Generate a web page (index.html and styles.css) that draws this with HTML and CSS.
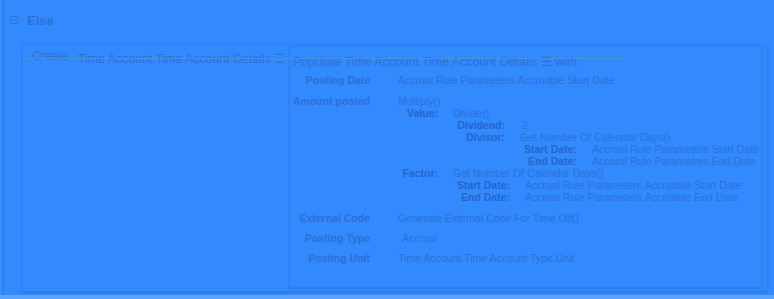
FILE: index.html
```html
<!DOCTYPE html>
<html lang="en">
<head>
    <meta charset="UTF-8">
    <title>Else</title>
    <link rel="stylesheet" href="styles.css">
</head>
<body>
<div class="panel">
    <div class="head">
        <span class="toggle"></span>
        <span class="head-title">Else</span>
    </div>
    <div class="create">
        <div class="create-left">
            <span class="verb">Create</span>
            <span class="target">Time Account.Time Account Details &#9776;</span>
        </div>
        <div class="populate">
            <div class="pop-title">Populate Time Account.Time Account Details &#9776; with:</div>
            <div class="row">
                <div class="label">Posting Date</div>
                <div class="value">Accrual Rule Parameters.Accruable Start Date</div>
            </div>
            <div class="row">
                <div class="label">Amount posted</div>
                <div class="value">
                    <div>Multiply()</div>
                    <div class="param">
                        <span class="k k40">Value:</span>
                        <div class="v">
                            <div>Divide()</div>
                            <div class="param">
                                <span class="k k52">Dividend:</span>
                                <div class="v v2">2</div>
                            </div>
                            <div class="param">
                                <span class="k k52">Divisor:</span>
                                <div class="v">
                                    <div>Get Number Of Calendar Days()</div>
                                    <div class="param">
                                        <span class="k k57">Start Date:</span>
                                        <div class="v">Accrual Rule Parameters.Start Date</div>
                                    </div>
                                    <div class="param">
                                        <span class="k k57">End Date:</span>
                                        <div class="v">Accrual Rule Parameters.End Date</div>
                                    </div>
                                </div>
                            </div>
                        </div>
                    </div>
                    <div class="param">
                        <span class="k k40">Factor:</span>
                        <div class="v">
                            <div>Get Number Of Calendar Days()</div>
                            <div class="param">
                                <span class="k k57">Start Date:</span>
                                <div class="v">Accrual Rule Parameters.Accruable Start Date</div>
                            </div>
                            <div class="param">
                                <span class="k k57">End Date:</span>
                                <div class="v">Accrual Rule Parameters.Accruable End Date</div>
                            </div>
                        </div>
                    </div>
                </div>
            </div>
            <div class="row tight">
                <div class="label">External Code</div>
                <div class="value">Generate External Code For Time Off()</div>
            </div>
            <div class="row tight">
                <div class="label">Posting Type</div>
                <div class="value indent">Accrual</div>
            </div>
            <div class="row tight">
                <div class="label">Posting Unit</div>
                <div class="value">Time Account.Time Account Type.Unit</div>
            </div>
        </div>
        <div class="drag-line"></div>
    </div>
</div>
</body>
</html>
```

FILE: styles.css
```css
* {
    margin: 0;
    padding: 0;
    box-sizing: border-box;
}

body {
    background-color: #5ea2ff;
    font-family: "Liberation Sans", Arial, sans-serif;
    color: #2b70d9;
    white-space: nowrap;
}

.panel {
    height: 295px;
    background-color: #3389fe;
    border-left: 2px solid #3a8dfe;
    box-shadow: inset 3px 0 0 #2f82f4;
    padding-left: 20px;
}

.head {
    display: flex;
    align-items: center;
    height: 44px;
    margin-left: -12px;
    padding-bottom: 4px;
}

.toggle {
    position: relative;
    width: 8px;
    height: 8px;
    border: 1px solid #2d74dc;
    margin-right: 9px;
}

.toggle::after {
    content: "";
    position: absolute;
    left: 1px;
    right: 1px;
    top: 2px;
    height: 1px;
    background-color: #2d74dc;
}

.head-title {
    font-size: 13px;
    font-weight: bold;
    color: #2a6fd6;
}

.create {
    position: relative;
    display: flex;
    width: 746px;
    height: 248px;
    border: 1px solid #2e7ef0;
    border-radius: 3px;
    box-shadow: 0 1px 2px #2c78e6;
}

.create-left {
    width: 266px;
    flex-shrink: 0;
    display: flex;
    align-items: flex-start;
    padding: 3px 0 0 9px;
}

.verb {
    font-size: 12px;
    line-height: 16px;
}

.target {
    font-size: 12.3px;
    line-height: 16px;
    margin: 3px 0 0 10px;
}

.populate {
    width: 473px;
    flex-shrink: 0;
    margin: 1px 0 3px 0;
    border: 1px solid #2e7ef0;
    border-radius: 3px;
    box-shadow: 0 1px 2px #2c78e6;
    padding: 7px 0 0 3px;
    font-size: 10.5px;
    line-height: 12px;
}

.pop-title {
    font-size: 12.3px;
    line-height: 16px;
    margin-bottom: 4px;
}

.row {
    display: flex;
    margin-bottom: 9px;
}

.row.tight {
    margin-bottom: 8px;
}

.label {
    width: 77px;
    flex-shrink: 0;
    display: flex;
    justify-content: flex-end;
    font-weight: bold;
    color: #2b6fd4;
}

.value {
    margin-left: 28px;
}

.value.indent {
    padding-left: 4px;
}

.param {
    display: flex;
}

.k {
    flex-shrink: 0;
    display: flex;
    justify-content: flex-end;
    font-weight: bold;
    color: #2465cc;
}

.k40 { width: 40px; }
.k52 { width: 52px; }
.k57 { width: 57px; }

.v {
    margin-left: 15px;
}

.v2 {
    margin-left: 17px;
}

.drag-line {
    position: absolute;
    left: 0;
    top: 13px;
    width: 601px;
    height: 1px;
    background-color: #4f90e4;
}
```
